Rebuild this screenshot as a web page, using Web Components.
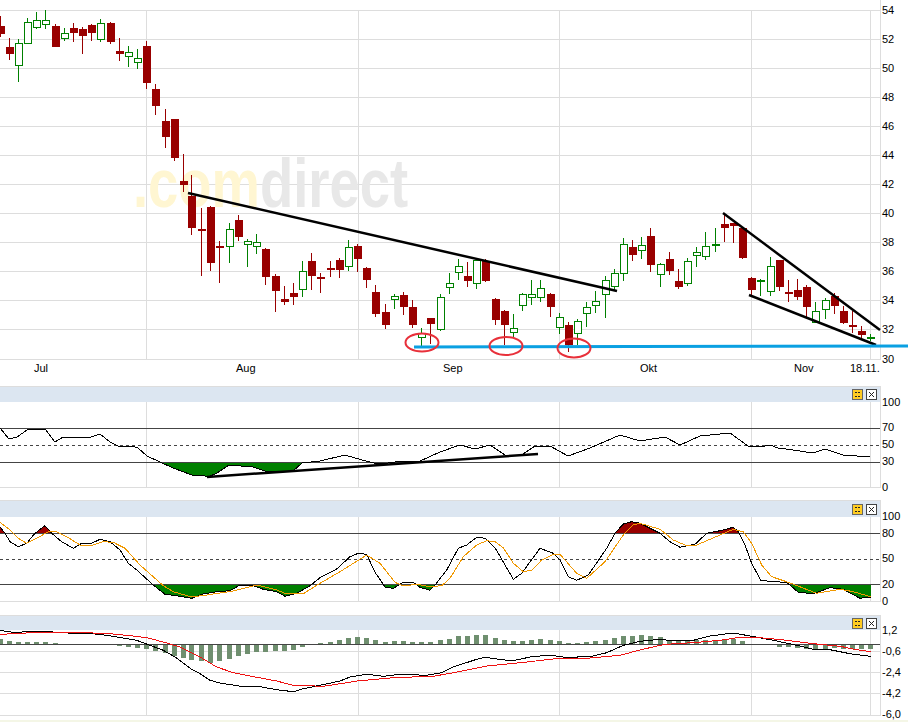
<!DOCTYPE html>
<html>
<head>
<meta charset="utf-8">
<title>Chart</title>
<style>
html, body { margin: 0; padding: 0; background: #fff; }
body { width: 908px; height: 722px; overflow: hidden; font-family: "Liberation Sans", Arial, sans-serif; }
</style>
</head>
<body>
<chart-page>
    <price-pane></price-pane>
    <rsi-pane><pane-button kind="config"></pane-button><pane-button kind="close"></pane-button></rsi-pane>
    <stoch-pane><pane-button kind="config"></pane-button><pane-button kind="close"></pane-button></stoch-pane>
    <macd-pane><pane-button kind="config"></pane-button><pane-button kind="close"></pane-button></macd-pane>
</chart-page>

<script>
const PLOT_RIGHT = 880;
const MONTH_LINES = [146, 358, 559, 751, 870];
const GRID = '#dddddd';
const DARK = '#444444';

// coordinates were read off 3x crops: origin + value / 3
const crop = (ox, oy, list) => {
    const out = [];
    for (let i = 0; i < list.length; i += 2) {
        out.push([ox + list[i] / 3, oy + list[i + 1] / 3]);
    }
    return out;
};
const toPoints = (pts) => pts.map(p => p[0].toFixed(1) + ',' + p[1].toFixed(1)).join(' ');
const hline = (y, x1, x2, color) => `<rect x="${x1}" y="${y}" width="${x2 - x1}" height="1" fill="${color}"/>`;
const vline = (x, y1, y2, color) => `<rect x="${x}" y="${y1}" width="1" height="${y2 - y1}" fill="${color}"/>`;
const label = (x, y, text) => `<text x="${x}" y="${y + 4}">${text}</text>`;
const trace = (pts, color) => `<polyline points="${toPoints(pts)}" fill="none" stroke="${color}" stroke-width="1"/>`;

// x, high, low, body top, body bottom, colour
const CANDLES = [
    [1,16,37,26,34,'r'],[10,38,60,47,54,'r'],[19,39,82,43,66,'g'],[28,18,44,22,44,'g'],[37,12,29,20,28,'g'],
    [46,10,29,20,25,'g'],[56,24,47,26,47,'r'],[65,28,41,33,39,'g'],[74,23,42,28,33,'r'],[83,27,54,29,36,'r'],
    [92,24,41,25,33,'r'],[101,19,42,23,40,'g'],[111,22,44,23,42,'r'],[120,38,61,51,54,'r'],[129,46,67,52,57,'g'],
    [138,49,69,58,63,'g'],[147,41,89,46,83,'r'],[156,84,115,89,106,'r'],[166,109,148,121,137,'r'],[175,119,161,119,158,'r'],
    [184,154,192,181,185,'r'],[192,175,235,196,228,'r'],[202,208,276,229,231,'r'],[211,206,271,207,263,'r'],[220,241,283,246,248,'r'],
    [230,223,263,229,247,'g'],[239,215,241,220,237,'r'],[248,239,267,241,245,'g'],[257,234,254,242,247,'g'],[266,248,285,249,277,'r'],
    [276,274,312,276,291,'r'],[285,286,305,299,302,'r'],[294,283,305,293,297,'r'],[303,261,297,271,290,'g'],[312,253,290,261,276,'r'],
    [321,273,293,277,279,'r'],[331,261,277,268,270,'r'],[340,258,278,260,270,'r'],[349,240,271,247,267,'g'],[358,244,272,246,259,'r'],
    [367,267,288,268,280,'r'],[376,285,317,292,314,'r'],[386,304,329,312,325,'r'],[395,294,309,296,300,'g'],[404,292,315,295,307,'r'],
    [413,300,328,307,325,'r'],[422,328,346,333,338,'g'],[431,318,344,318,324,'r'],[441,294,331,297,330,'g'],[450,273,294,283,288,'g'],
    [459,259,280,266,273,'g'],[468,262,287,276,281,'r'],[477,259,289,260,284,'g'],[486,259,282,261,281,'r'],[496,298,325,299,320,'r'],
    [505,310,345,311,325,'r'],[514,314,337,328,333,'g'],[523,293,311,294,306,'g'],[532,280,305,294,298,'g'],[541,280,302,288,298,'g'],
    [551,293,317,294,307,'r'],[560,313,334,317,328,'g'],[569,322,352,325,345,'r'],[578,319,345,321,334,'g'],[587,302,327,307,314,'g'],
    [596,291,313,301,306,'g'],[606,276,318,280,295,'g'],[615,269,291,273,287,'g'],[624,238,281,244,274,'g'],[633,240,261,247,255,'r'],
    [642,237,259,245,251,'g'],[651,228,272,236,265,'r'],[661,263,287,264,275,'g'],[670,252,275,259,271,'r'],[679,269,289,281,287,'r'],
    [688,258,286,261,284,'g'],[697,247,267,252,256,'g'],[706,232,260,246,257,'g'],[716,228,252,244,246,'g'],[725,215,242,224,228,'r'],
    [734,223,243,223,226,'r'],[743,228,259,228,258,'r'],[752,277,297,278,290,'r'],[761,279,296,280,282,'g'],[771,257,296,266,292,'g'],
    [780,260,291,260,287,'r'],[789,280,302,292,294,'r'],[798,279,300,290,297,'r'],[807,285,317,287,307,'r'],[816,302,323,311,323,'g'],
    [826,298,319,300,310,'g'],[835,293,314,296,306,'r'],[844,306,324,311,323,'r'],[853,311,333,325,327,'r'],[862,326,339,331,335,'r'],
    [871,334,341,337,339,'g']
];

class ChartPage extends HTMLElement {
    constructor() {
        super();
        this.attachShadow({ mode: 'open' });
        this.shadowRoot.innerHTML = `
            <style>
                :host { display: flex; flex-direction: column; width: 908px; height: 722px; background: #fff; }
                .strip { height: 2px; background: #f4f6e6; }
            </style>
            <slot></slot>
            <div class="strip"></div>
        `;
    }
}

class PaneButton extends HTMLElement {
    constructor() {
        super();
        this.attachShadow({ mode: 'open' });
    }

    connectedCallback() {
        const isClose = this.getAttribute('kind') === 'close';
        const icon = isClose
            ? '<rect x=".5" y=".5" width="10" height="10" fill="#fff" stroke="#444"/><path d="M3 3l5 5M8 3l-5 5" stroke="#222" fill="none"/>'
            : '<rect x=".5" y=".5" width="10" height="10" fill="#ffcc22" stroke="#666"/><path d="M3 3.5h2M6 3.5h2M3 7.5h2M6 7.5h2" stroke="#222" fill="none"/>';
        this.shadowRoot.innerHTML = `
            <style>
                :host { display: block; width: 11px; height: 11px; }
                svg { display: block; }
            </style>
            <svg width="11" height="11" viewBox="0 0 11 11">${icon}</svg>
        `;
    }
}

class PricePane extends HTMLElement {
    constructor() {
        super();
        this.attachShadow({ mode: 'open' });
    }

    connectedCallback() {
        let grid = '';
        let axis = '';
        for (let i = 0; i <= 12; i++) {
            const y = i === 12 ? 359 : 10 + 29 * i;
            grid += hline(y, 0, PLOT_RIGHT, GRID);
            axis += label(882, y, 54 - i * 2);
        }
        MONTH_LINES.forEach(x => { grid += vline(x, 10, 360, GRID); });
        grid += vline(PLOT_RIGHT, 0, 360, GRID);

        const candles = CANDLES.map(([x, hi, lo, top, bot, c]) => {
            const color = c === 'r' ? '#990000' : '#008000';
            const wick = `<rect x="${x - 1}" y="${hi}" width="1" height="${lo - hi}" fill="${color}"/>`;
            if (c === 'r') {
                return wick + `<rect x="${x - 4}" y="${top}" width="8" height="${bot - top}" fill="${color}"/>`;
            }
            return wick + `<rect x="${x - 3.5}" y="${top + 0.5}" width="7" height="${bot - top - 1}" fill="#fff" stroke="${color}"/>`;
        }).join('');

        const months = [['Jul', 34], ['Aug', 236], ['Sep', 443], ['Okt', 640], ['Nov', 794], ['18.11.', 850]]
            .map(([t, x]) => label(x, 368, t)).join('');

        this.shadowRoot.innerHTML = `
            <style>
                :host { display: block; height: 386px; }
                svg { display: block; font: 11px "Liberation Sans", Arial, sans-serif; fill: #000; }
                .crisp { shape-rendering: crispEdges; }
                .mark { font: bold 68px "Liberation Sans", Arial, sans-serif; }
            </style>
            <svg width="908" height="386" viewBox="0 0 908 386">
                <g class="crisp">${grid}</g>
                <text class="mark" transform="translate(133 207) scale(.8 1)"><tspan fill="#fff6d2">.com</tspan><tspan fill="#e8e8e8">direct</tspan></text>
                <g class="crisp">${candles}</g>
                <g stroke="#000" stroke-width="2.5" fill="none">
                    <path d="M188 193L617 291"/>
                    <path d="M723 213L880 330"/>
                    <path d="M749 295L876 345"/>
                </g>
                <path d="M414 347L908 346" stroke="#0aa0e2" stroke-width="3" fill="none"/>
                <g stroke="#e8303a" stroke-width="2" fill="none">
                    <ellipse cx="422" cy="342.5" rx="16.5" ry="9"/>
                    <ellipse cx="506" cy="346" rx="16.5" ry="9"/>
                    <ellipse cx="574" cy="348" rx="16.5" ry="9.5"/>
                </g>
                ${axis}
                ${months}
            </svg>
        `;
    }
}

// shared frame of the three lower panes; subclasses fill in config() and content()
class IndicatorPane extends HTMLElement {
    constructor() {
        super();
        this.attachShadow({ mode: 'open' });
    }

    connectedCallback() {
        const { top, headEnd, plotEnd, height } = this.config();
        const plotH = height - (headEnd - top);
        let frame = hline(plotEnd, 0, PLOT_RIGHT, GRID);
        MONTH_LINES.forEach(x => { frame += vline(x, headEnd, plotEnd, GRID); });
        frame += vline(PLOT_RIGHT, headEnd, plotEnd + 1, GRID);

        this.shadowRoot.innerHTML = `
            <style>
                :host { display: block; height: ${height}px; }
                .head {
                    box-sizing: border-box;
                    width: 881px;
                    height: ${headEnd - top}px;
                    background: #dce6f1;
                    border-top: 1px solid ${GRID};
                    border-right: 1px solid ${GRID};
                    display: flex;
                    justify-content: flex-end;
                    align-items: center;
                    gap: 3px;
                    padding-right: 3px;
                }
                svg { display: block; font: 11px "Liberation Sans", Arial, sans-serif; fill: #000; }
                .crisp { shape-rendering: crispEdges; }
            </style>
            <div class="head"><slot></slot></div>
            <svg width="908" height="${plotH}" viewBox="0 ${headEnd} 908 ${plotH}" style="overflow:visible">
                <g class="crisp">${frame}${this.content()}</g>
                ${this.axis().map(([y, t]) => label(882, y, t)).join('')}
            </svg>
        `;
    }

    // area between a line and a threshold, on one side of the threshold only
    fill(pts, level, side, color, id) {
        const x1 = pts[0][0];
        const x2 = pts[pts.length - 1][0];
        const poly = toPoints([[x1, level], ...pts, [x2, level]]);
        const clip = side === 'above'
            ? `<rect x="0" y="${level - 200}" width="908" height="200"/>`
            : `<rect x="0" y="${level}" width="908" height="200"/>`;
        return `<clipPath id="${id}">${clip}</clipPath><polygon points="${poly}" fill="${color}" clip-path="url(#${id})"/>`;
    }
}

class RsiPane extends IndicatorPane {
    config() {
        return { top: 386, headEnd: 402, plotEnd: 487, height: 114 };
    }

    axis() {
        return [[402, '100'], [427, '70'], [444, '50'], [461, '30'], [487, '0']];
    }

    content() {
        const line = [
            [0,428],[9,439],[17,437],[27,430],[45,429],[55,442],[63,437],[78,437],[88,438],[100,434],[110,442],[118,446],
            [132,446],[138,448],[147,456],[160,462],[173,468],[192,475],[202,475],[208,477],[217,473],[229,465],[253,467],
            [265,471],[293,471],[302,463],[320,461],[345,455],[362,460],[378,464],[388,463],[402,461],[420,461],[440,452],
            [460,445],[475,449],[490,445],[505,455],[520,456],[535,446],[550,446],[568,456],[590,448],[620,435],[640,441],
            [665,437],[680,445],[700,436],[730,433],[748,446],[760,447],[770,445],[778,448],[793,450],[813,453],[825,449],
            [843,455],[870,457]
        ];
        return this.fill(line, 462, 'below', '#008000', 'rsi-fill')
            + hline(428, 0, PLOT_RIGHT, DARK)
            + hline(462, 0, PLOT_RIGHT, DARK)
            + `<path d="M0 445.5H880" stroke="${DARK}" stroke-dasharray="3 3" fill="none"/>`
            + trace(line, '#000')
            + `<path d="M207 477L538 454" stroke="#000" stroke-width="2.5" fill="none" shape-rendering="auto"/>`;
    }
}

class StochPane extends IndicatorPane {
    config() {
        return { top: 500, headEnd: 517, plotEnd: 601, height: 115 };
    }

    axis() {
        return [[516, '100'], [533, '80'], [558, '50'], [584, '20'], [601, '0']];
    }

    content() {
        const black = [
            ...crop(0, 495, [0,95,15,115,30,140,55,155,80,145,105,115,135,92,155,115,185,140,220,160,245,145,275,145,300,133,330,140,360,165,385,205,410,225,460,270,495,298,530,302,575,310,610,297,650,290,690,287,715,273,760,272,790,283,830,290,855,304,890,295,930,272,960,248]),
            ...crop(320, 495, [50,222,90,185,115,175,140,178,165,232,190,268,195,277,220,280,250,262,280,262,300,277,330,286,345,270,380,225,415,160,440,150,470,127,495,130,525,158,580,253,605,235,660,160,700,175,720,195,745,245,770,256,805,240,860,160,885,115,910,87,935,80,960,85]),
            ...crop(640, 495, [30,100,60,115,90,140,120,157,165,148,200,115,240,107,280,97,295,110,315,150,335,205,362,256,400,260,440,262,475,292,520,296,570,278,610,283,660,310,692,306])
        ];
        const orange = [
            ...crop(0, 495, [0,82,30,105,55,130,80,145,110,130,145,110,170,110,200,125,240,150,280,150,310,140,340,142,375,160,420,210,490,272,520,290,575,306,620,300,700,288,770,270,830,285,860,297,910,296,960,265]),
            ...crop(320, 495, [60,230,140,180,180,205,225,262,250,273,290,268,330,275,365,272,390,250,430,185,470,150,500,137,525,140,550,158,580,205,610,230,635,226,665,195,700,178,720,178,770,235,800,250,855,200,910,120,940,90,960,85]),
            ...crop(640, 495, [60,103,100,135,140,152,170,150,240,120,280,103,310,110,335,145,365,210,395,245,445,262,530,295,600,283,640,290,692,305])
        ];
        return this.fill(black, 533.5, 'above', '#990000', 'stoch-hi')
            + this.fill(black, 584, 'below', '#008000', 'stoch-lo')
            + hline(533, 0, PLOT_RIGHT, DARK)
            + hline(584, 0, PLOT_RIGHT, DARK)
            + `<path d="M0 559.5H880" stroke="${DARK}" stroke-dasharray="3 3" fill="none"/>`
            + trace(black, '#000')
            + trace(orange, '#f09800');
    }
}

class MacdPane extends IndicatorPane {
    config() {
        return { top: 615, headEnd: 630, plotEnd: 715, height: 105 };
    }

    axis() {
        return [[630, '1,2'], [651, '-0,6'], [672, '-2,4'], [693, '-4,2'], [714, '-6,0']];
    }

    content() {
        // bar ends per candle, in crop units from y 612; 97 is the zero line
        const bars = [
            82,87,90,90,90,90,94,97,97,97,97,97,97,102,105,108,112,118,123,132,138,144,148,152,148,141,132,126,120,120,117,117,114,105,97,93,
            90,84,78,75,78,84,90,87,87,90,90,90,84,81,72,72,69,69,78,84,87,87,84,81,84,87,93,93,90,87,84,78,72,72,69,
            72,75,84,84,84,84,84,84,84,81,87,97,97,97,105,105,108,111,111,111,108,110,110,111,111
        ];
        const zero = 644;
        const hist = bars.map((v, i) => {
            const end = Math.round(612 + v / 3);
            if (end === zero) return '';
            const y = Math.min(end, zero);
            return `<rect x="${CANDLES[i][0] - 3}" y="${y}" width="5" height="${Math.abs(end - zero)}" fill="#6f8f6f"/>`;
        }).join('');

        const black = [
            ...crop(0, 612, [0,55,45,62,100,57,145,57,160,60,205,63,260,63,320,70,365,77,410,85,450,100,490,115,525,135,575,172,600,185,630,205,660,213,730,224,780,224,830,233,880,239,910,230,960,220]),
            ...crop(320, 612, [60,207,90,195,140,187,190,193,240,187,320,190,365,182,400,165,470,142,495,136,545,143,580,146,630,135,680,130,720,133,740,137,820,132,860,122,910,100,960,88]),
            ...crop(640, 612, [60,82,100,87,160,85,210,72,280,63,330,72,400,85,470,100,520,112,570,113,630,125,692,133])
        ];
        const red = [
            ...crop(0, 612, [0,67,45,65,95,62,260,62,340,66,400,72,440,77,490,90,540,105,600,135,650,165,700,182,750,192,830,207,875,219,920,219,960,224]),
            ...crop(320, 612, [70,214,110,207,210,198,345,192,400,182,500,162,620,150,700,141,800,139,900,130,960,114]),
            ...crop(640, 612, [60,100,100,95,160,92,240,85,300,76,370,78,440,85,520,95,600,103,650,113,692,119])
        ];
        return hline(651, 0, PLOT_RIGHT, GRID)
            + hline(672, 0, PLOT_RIGHT, GRID)
            + hline(693, 0, PLOT_RIGHT, GRID)
            + hist
            + hline(644, 0, PLOT_RIGHT, DARK)
            + trace(black, '#000')
            + trace(red, '#ee1111');
    }
}

customElements.define('chart-page', ChartPage);
customElements.define('pane-button', PaneButton);
customElements.define('price-pane', PricePane);
customElements.define('rsi-pane', RsiPane);
customElements.define('stoch-pane', StochPane);
customElements.define('macd-pane', MacdPane);
</script>
</body>
</html>
